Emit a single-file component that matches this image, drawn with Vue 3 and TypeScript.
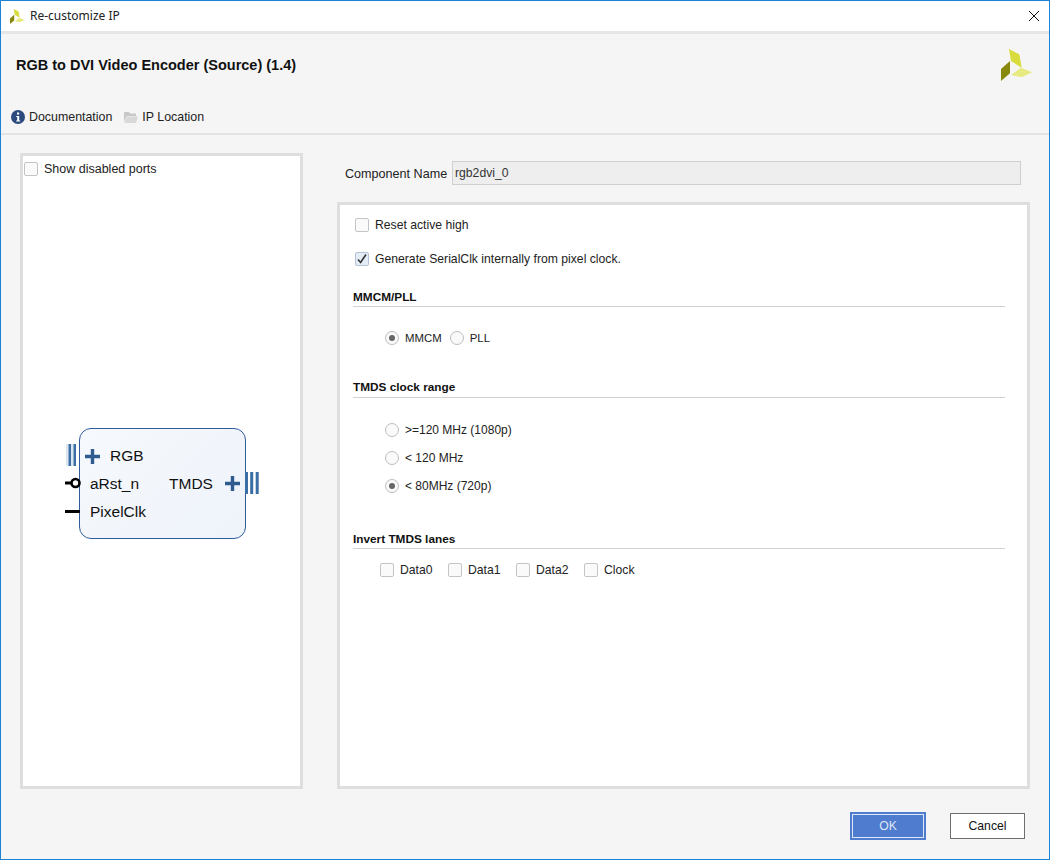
<script setup lang="ts">
interface Option {
  label: string
  on?: boolean
}

const clockRanges: Option[] = [
  { label: '>=120 MHz (1080p)' },
  { label: '< 120 MHz' },
  { label: '< 80MHz (720p)', on: true },
]

const lanes: string[] = ['Data0', 'Data1', 'Data2', 'Clock']
</script>

<template>
  <div class="window">
    <div class="titlebar">
      <svg class="app-icon" width="15" height="15" viewBox="0 0 32 32">
        <path d="M8 0 18.3 5.3 20.7 18.7 10 12Z" fill="#d8dc3c" />
        <path d="M0 20 9 12 9 24.3 0 32Z" fill="#88880c" />
        <path d="M10 26 20 18.7 31.3 23.3 20.7 28.3Z" fill="#e6ea80" />
      </svg>
      <span class="title-text">Re-customize IP</span>
      <svg width="12" height="12" viewBox="0 0 12 12">
        <path d="M1 1 11 11M11 1 1 11" stroke="#111" stroke-width="1" fill="none" />
      </svg>
    </div>

    <div class="header">
      <div class="header-top">
        <h1 class="heading">RGB to DVI Video Encoder (Source) (1.4)</h1>
        <svg width="32" height="32" viewBox="0 0 32 32">
          <path d="M8 0 18.3 5.3 20.7 18.7 10 12Z" fill="#d8dc3c" />
          <path d="M0 20 9 12 9 24.3 0 32Z" fill="#88880c" />
          <path d="M10 26 20 18.7 31.3 23.3 20.7 28.3Z" fill="#e6ea80" />
        </svg>
      </div>
      <div class="links">
        <span class="link">
          <svg width="14" height="14" viewBox="0 0 14 14">
            <circle cx="7" cy="7" r="7" fill="#2c4a7e" />
            <rect x="6" y="2.5" width="2.2" height="2" fill="#fff" />
            <path d="M5.2 6h3v4.6h1v1H5.2v-1h1V7h-1Z" fill="#fff" />
          </svg>
          Documentation
        </span>
        <span class="link">
          <svg width="14" height="13" viewBox="0 0 14 13">
            <path d="M0 1h5l1 1.5h6V5H3L0 11Z" fill="#c8c8c8" />
            <path d="M3.2 5.5H14L12 12H0.4Z" fill="#d8d8d8" />
          </svg>
          IP Location
        </span>
      </div>
    </div>

    <div class="body">
      <section class="symbol-panel">
        <label class="check show-ports">
          <span class="box"></span>
          Show disabled ports
        </label>
        <div class="block">
          <span class="port-label rgb">RGB</span>
          <span class="port-label arst">aRst_n</span>
          <span class="port-label pclk">PixelClk</span>
          <span class="port-label tmds">TMDS</span>

          <svg class="bus-left" width="10" height="22" viewBox="0 0 10 22">
            <rect x="0" width="2.5" height="22" fill="#dbe6f1" />
            <rect x="2.5" width="2.5" height="22" fill="#3a6ea5" />
            <rect x="5" width="2.5" height="22" fill="#dbe6f1" />
            <rect x="7.5" width="2.5" height="22" fill="#3a6ea5" />
          </svg>
          <svg class="left-plus" width="15" height="15" viewBox="0 0 15 15">
            <path d="M7.5 0V15M0 7.5H15" stroke="#2f5b8f" stroke-width="3.4" fill="none" />
          </svg>
          <svg class="reset-pin" width="16" height="12" viewBox="0 0 16 12">
            <path d="M0 6H6" stroke="#000" stroke-width="3" fill="none" />
            <circle cx="10.5" cy="6" r="4" fill="#fff" stroke="#000" stroke-width="2.6" />
          </svg>
          <svg class="clk-pin" width="15" height="3" viewBox="0 0 15 3">
            <rect width="15" height="3" fill="#000" />
          </svg>
          <svg class="right-plus" width="15" height="15" viewBox="0 0 15 15">
            <path d="M7.5 0V15M0 7.5H15" stroke="#2f5b8f" stroke-width="3.4" fill="none" />
          </svg>
          <svg class="bus-right" width="14" height="22" viewBox="0 0 14 22">
            <rect x="0" width="3" height="22" fill="#3a6ea5" />
            <rect x="5.2" width="3" height="22" fill="#3a6ea5" />
            <rect x="10.7" width="3" height="22" fill="#3a6ea5" />
          </svg>
        </div>
      </section>

      <div class="config">
        <div class="name-row">
          <span class="name-label">Component Name</span>
          <div class="name-input">rgb2dvi_0</div>
        </div>

        <section class="options">
          <label class="check first">
            <span class="box"></span>
            Reset active high
          </label>
          <label class="check second">
            <span class="box checked">
              <svg width="12" height="12" viewBox="0 0 12 12">
                <path d="M2 6.5 4.6 9.5 10 1.5" stroke="#333" stroke-width="1.6" fill="none" />
              </svg>
            </span>
            Generate SerialClk internally from pixel clock.
          </label>

          <h2 class="group-title pll-title">MMCM/PLL</h2>
          <div class="radio-row">
            <label class="radio narrow"><span class="dot on"></span>MMCM</label>
            <label class="radio narrow"><span class="dot"></span>PLL</label>
          </div>

          <h2 class="group-title tmds-title">TMDS clock range</h2>
          <div class="radio-col">
            <label v-for="range in clockRanges" :key="range.label" class="radio">
              <span class="dot" :class="{ on: range.on }"></span>{{ range.label }}
            </label>
          </div>

          <h2 class="group-title lanes-title">Invert TMDS lanes</h2>
          <div class="lane-row">
            <label v-for="lane in lanes" :key="lane" class="check lane">
              <span class="box"></span>
              {{ lane }}
            </label>
          </div>
        </section>
      </div>
    </div>

    <div class="footer">
      <button class="btn ok" type="button"><span>OK</span></button>
      <button class="btn cancel" type="button">Cancel</button>
    </div>
  </div>
</template>

<style scoped>
.window {
  box-sizing: border-box;
  width: 1050px;
  height: 860px;
  display: flex;
  flex-direction: column;
  border: 1px solid #1883d7;
  background: #f5f5f5;
  font-family: "Liberation Sans", Arial, sans-serif;
  font-size: 12.2px;
  color: #1a1a1a;
  overflow: hidden;
}

.titlebar {
  flex: none;
  height: 30px;
  display: flex;
  align-items: center;
  padding: 0 9px;
  background: #fff;
  border-bottom: 3px solid #e6e6e6;
}

.app-icon {
  margin-right: 5px;
}

.title-text {
  flex: 1;
  font-family: "Noto Sans", sans-serif;
  font-size: 12px;
  line-height: 14px;
  color: #222;
}

.header {
  flex: none;
  height: 101px;
  box-sizing: border-box;
  border-bottom: 2px solid #e3e3e3;
  display: flex;
  flex-direction: column;
}

.header-top {
  height: 61px;
  display: flex;
  align-items: flex-start;
  justify-content: space-between;
  padding: 15px 16px 0 15px;
}

.heading {
  margin: 8px 0 0;
  font-size: 14.5px;
  font-weight: 700;
  color: #111;
}

.links {
  display: flex;
  gap: 12px;
  padding-left: 10px;
  font-size: 12.4px;
}

.link {
  display: flex;
  align-items: center;
  gap: 4px;
  color: #222;
}

.body {
  flex: none;
  height: 636px;
  display: flex;
  padding: 18px 19px 0;
  gap: 34px;
}

.symbol-panel {
  flex: none;
  width: 283px;
  height: 636px;
  box-sizing: border-box;
  position: relative;
  background: #fff;
  border: 3px solid #dedede;
}

.check {
  display: flex;
  align-items: center;
  gap: 6px;
  color: #222;
}

.box {
  flex: none;
  box-sizing: border-box;
  width: 14px;
  height: 14px;
  border: 1px solid #c4c4c4;
  border-radius: 2px;
  background: #fafafa;
  display: flex;
  align-items: center;
  justify-content: center;
}

.box.checked {
  background: #e4ecf6;
  border-color: #b4c2d4;
}

.show-ports {
  padding: 6px 0 0 1px;
  font-size: 12.5px;
}

.block {
  position: absolute;
  left: 56px;
  top: 272px;
  width: 167px;
  height: 111px;
  box-sizing: border-box;
  border: 1px solid #2f5b9b;
  border-radius: 12px;
  background: linear-gradient(135deg, #f6f9fd, #eef3fa);
  font-size: 15.5px;
  color: #111;
}

.port-label {
  position: absolute;
  line-height: 18px;
}

.rgb { left: 30px; top: 18px; }
.arst { left: 10px; top: 46px; }
.pclk { left: 10px; top: 74px; }
.tmds { left: 89px; top: 46px; }

.block svg {
  position: absolute;
}

.bus-left { left: -14px; top: 15px; }
.left-plus { left: 5px; top: 20px; }
.reset-pin { left: -15px; top: 48px; }
.clk-pin { left: -15px; top: 81px; }
.right-plus { left: 145px; top: 47px; }
.bus-right { left: 165px; top: 43px; }

.config {
  flex: 1;
  min-width: 0;
  display: flex;
  flex-direction: column;
}

.name-row {
  display: flex;
  align-items: center;
  height: 24px;
  padding: 0 9px 0 8px;
  margin-top: 8px;
}

.name-label {
  width: 107px;
  padding-top: 1px;
  font-size: 12.6px;
  color: #222;
}

.name-input {
  flex: 1;
  box-sizing: border-box;
  height: 24px;
  line-height: 23px;
  padding-left: 2px;
  background: #eeeeee;
  border: 1px solid #cfcfcf;
  color: #333;
}

.options {
  width: 693px;
  height: 587px;
  box-sizing: border-box;
  margin-top: 17px;
  padding: 0 22px 0 13px;
  background: #fff;
  border: 3px solid #dedede;
}

.first {
  padding-left: 2px;
  margin-top: 13px;
}

.second {
  padding-left: 2px;
  margin-top: 20px;
}

.group-title {
  margin: 0;
  padding-bottom: 2px;
  font-size: 11.8px;
  font-weight: 700;
  color: #111;
  border-bottom: 1px solid #d2d2d2;
  line-height: 14px;
}

.pll-title { margin-top: 24px; }
.tmds-title { margin-top: 35px; padding-bottom: 3px; }
.lanes-title { margin-top: 39px; }

.radio-row {
  display: flex;
  gap: 8px;
  padding-left: 32px;
  margin-top: 24px;
}

.radio-col {
  display: flex;
  flex-direction: column;
  gap: 14px;
  padding-left: 32px;
  margin-top: 25px;
}

.radio {
  display: flex;
  align-items: center;
  gap: 6px;
  height: 14px;
  font-size: 12px;
  color: #222;
}

.radio.narrow {
  font-size: 11.4px;
}

.dot {
  flex: none;
  box-sizing: border-box;
  width: 14px;
  height: 14px;
  border: 1px solid #bdbdbd;
  border-radius: 50%;
  background: #fafafa;
  display: flex;
  align-items: center;
  justify-content: center;
}

.dot.on::after {
  content: "";
  width: 6px;
  height: 6px;
  border-radius: 50%;
  background: #666;
}

.lane-row {
  display: flex;
  gap: 15px;
  padding-left: 27px;
  margin-top: 14px;
}

.lane {
  width: 53px;
}

.footer {
  flex: 1;
  display: flex;
  justify-content: flex-end;
  align-items: flex-start;
  gap: 24px;
  padding: 23px 24px 0 0;
}

.btn {
  box-sizing: border-box;
  font-family: inherit;
  font-size: 12.2px;
  padding: 0;
}

.ok {
  width: 76px;
  height: 28px;
  border: 2px solid #4f7ccf;
  background: #4f7ccf;
  color: #dfe6f5;
}

.ok span {
  display: block;
  box-sizing: border-box;
  height: 24px;
  line-height: 22px;
  border: 1px solid #dfe8f8;
}

.cancel {
  width: 75px;
  height: 26px;
  margin-top: 1px;
  border: 1px solid #6e6e6e;
  background: #fff;
  color: #111;
}
</style>
